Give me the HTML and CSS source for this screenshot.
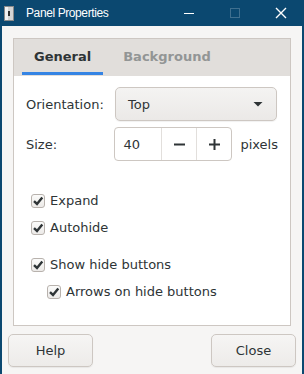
FILE: index.html
```html
<!DOCTYPE html>
<html>
<head>
	<title>Panel Properties</title>
	<link rel="stylesheet" href="styles.css">
</head>
<body>

	<div class="window">
		<div class="titlebar">
			<svg class="app-icon" width="10" height="15" viewBox="0 0 10 15">
				<rect x="0.5" y="0.5" width="9" height="14" fill="#d4d4d4" stroke="#8a8a8a"/>
				<rect x="1" y="1" width="3" height="13" fill="#f2f2f2"/>
				<rect x="4" y="5" width="2" height="5" fill="#333"/>
			</svg>
			<span class="title">Panel Properties</span>
			<div class="wm-buttons">
				<svg width="12" height="12" viewBox="0 0 12 12"><line x1="1" y1="6.5" x2="11" y2="6.5" stroke="#fff" stroke-width="1"/></svg>
				<svg width="12" height="12" viewBox="0 0 12 12"><rect x="1.5" y="1.5" width="9" height="9" fill="none" stroke="#3f6f8f" stroke-width="1"/></svg>
				<svg width="12" height="12" viewBox="0 0 12 12"><path d="M1 1 L11 11 M11 1 L1 11" stroke="#fff" stroke-width="1.4"/></svg>
			</div>
		</div>

		<div class="content">
			<div class="notebook">
				<div class="tabs">
					<div class="tab active">General</div>
					<div class="tab">Background</div>
				</div>
				<div class="page">
					<div class="form-row">
						<span class="label">Orientation:</span>
						<div class="combo">
							<span>Top</span>
							<svg width="10" height="5" viewBox="0 0 10 5"><path d="M0.5 0 L9.5 0 L5 4.5 Z" fill="#2e3436"/></svg>
						</div>
					</div>
					<div class="form-row">
						<span class="label">Size:</span>
						<div class="spin">
							<span class="spin-entry">40</span>
							<span class="spin-btn"><svg width="11" height="11" viewBox="0 0 11 11"><rect x="0" y="4.5" width="11" height="2" fill="#2e3436"/></svg></span>
							<span class="spin-btn"><svg width="11" height="11" viewBox="0 0 11 11"><rect x="0" y="4.5" width="11" height="2" fill="#2e3436"/><rect x="4.5" y="0" width="2" height="11" fill="#2e3436"/></svg></span>
						</div>
						<span class="unit">pixels</span>
					</div>

					<div class="checks">
						<div class="check"><span class="box"><svg width="12" height="12" viewBox="0 0 12 12"><path d="M2 6.2 L5 9 L10.3 2.5" fill="none" stroke="#2e3436" stroke-width="2.4"/></svg></span>Expand</div>
						<div class="check"><span class="box"><svg width="12" height="12" viewBox="0 0 12 12"><path d="M2 6.2 L5 9 L10.3 2.5" fill="none" stroke="#2e3436" stroke-width="2.4"/></svg></span>Autohide</div>
						<div class="check spaced"><span class="box"><svg width="12" height="12" viewBox="0 0 12 12"><path d="M2 6.2 L5 9 L10.3 2.5" fill="none" stroke="#2e3436" stroke-width="2.4"/></svg></span>Show hide buttons</div>
						<div class="check sub"><span class="box"><svg width="12" height="12" viewBox="0 0 12 12"><path d="M2 6.2 L5 9 L10.3 2.5" fill="none" stroke="#2e3436" stroke-width="2.4"/></svg></span>Arrows on hide buttons</div>
					</div>
				</div>
			</div>

			<div class="actions">
				<button class="btn">Help</button>
				<button class="btn">Close</button>
			</div>
		</div>
	</div>

</body>
</html>
```

FILE: styles.css
```css
*{
	margin: 0;
	padding: 0;
	box-sizing: border-box;
}
body{
	font-family: "DejaVu Sans", sans-serif;
	font-size: 13px;
	color: #2e3436;
	background: #f6f5f4;
}
.window{
	width: 304px;
	height: 374px;
	border-left: 2px solid #0b4870;
	border-right: 2px solid #0b4870;
	background: #f6f5f4;
	display: flex;
	flex-direction: column;
}
.titlebar{
	height: 26px;
	background: #0b4870;
	display: flex;
	align-items: center;
	padding-left: 2px;
}
.app-icon{
	margin-right: 12px;
}
.title{
	font-family: "Liberation Sans", sans-serif;
	font-size: 12px;
	letter-spacing: -0.4px;
	color: #fff;
	flex: 1;
}
.wm-buttons{
	display: flex;
	gap: 34px;
	margin-right: 15px;
}

.content{
	flex: 1;
	padding: 12px 11px 0 11px;
	display: flex;
	flex-direction: column;
}
.notebook{
	height: 288px;
	border: solid 1px #cdc7c2;
	background: #fff;
	display: flex;
	flex-direction: column;
}
.tabs{
	height: 37px;
	background: #e1dedb;
	border-bottom: solid 1px #e1dedb;
	display: flex;
	padding-left: 8px;
	gap: 8px;
}
.tab{
	padding: 0 12px;
	font-weight: bold;
	color: #929595;
	display: flex;
	align-items: center;
	border-bottom: solid 3px transparent;
	padding-top: 1px;
}
.tab.active{
	color: #2e3436;
	border-bottom-color: #3584e4;
}
.page{
	padding: 11px 12px 0 12px;
}
.form-row{
	display: flex;
	align-items: center;
	height: 34px;
	margin-bottom: 6px;
}
.label{
	width: 89px;
}
.combo{
	width: 162px;
	height: 34px;
	border: solid 1px #cdc7c2;
	border-radius: 5px;
	background: linear-gradient(#f4f3f2, #ebe9e7);
	box-shadow: 0 1px 1px rgba(0,0,0,0.06);
	display: flex;
	align-items: center;
	justify-content: space-between;
	padding: 0 13px 0 12px;
}
.spin{
	height: 34px;
	display: flex;
	border: solid 1px #cdc7c2;
	border-radius: 4px;
	background: #fff;
}
.spin-entry{
	width: 46px;
	padding-left: 8px;
	display: flex;
	align-items: center;
}
.spin-btn{
	width: 35px;
	border-left: solid 1px #e2dfdc;
	display: flex;
	align-items: center;
	justify-content: center;
}
.unit{
	margin-left: 8px;
}

.checks{
	padding-top: 20px;
	padding-left: 5px;
}
.check{
	height: 27px;
	display: flex;
	align-items: center;
}
.check.spaced{
	margin-top: 10px;
}
.check.sub{
	margin-left: 16px;
}
.box{
	width: 14px;
	height: 14px;
	border: solid 1px #b8b2ad;
	border-radius: 3px;
	background: linear-gradient(#fbfbfa, #eceae8);
	display: flex;
	align-items: center;
	justify-content: center;
	margin-right: 5px;
}

.actions{
	display: flex;
	justify-content: space-between;
	padding: 8px 0 0;
	margin: 0 -5px;
}
.btn{
	width: 85px;
	height: 33px;
	font-family: "DejaVu Sans", sans-serif;
	font-size: 13px;
	color: #2e3436;
	border: solid 1px #cdc7c2;
	border-radius: 5px;
	background: linear-gradient(#f6f5f4, #edebe9);
	box-shadow: 0 1px 1px rgba(0,0,0,0.06);
}
```
